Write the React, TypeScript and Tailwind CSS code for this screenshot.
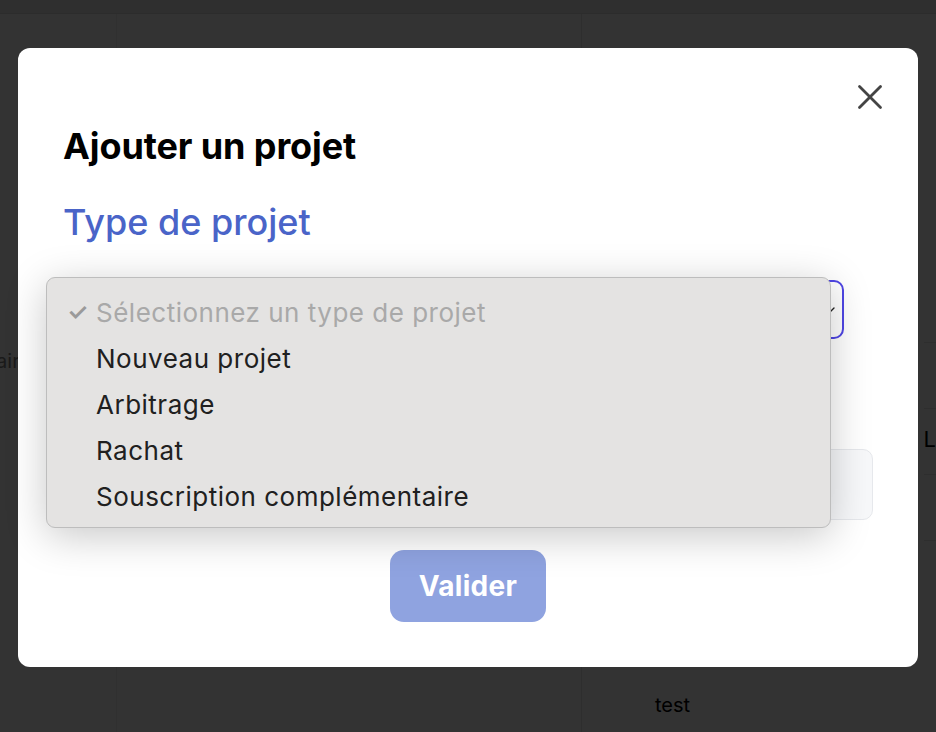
import { ChevronDown, X } from 'lucide-react';

const OPTIONS = ['Nouveau projet', 'Arbitrage', 'Rachat', 'Souscription complémentaire'];

export default function App() {
  return (
    <div className="relative w-[936px] h-[732px] overflow-hidden bg-[#333333] font-['Inter',sans-serif]">
      {/* Page behind the overlay */}
      <div className="h-[14px] bg-[#2f2f2f] border-b border-[#2c2c2c]" />
      <div className="flex h-[718px]">
        <div className="w-[118px] border-r border-[#303030] pt-[332px]">
          <div className="w-[31px] flex justify-end whitespace-nowrap text-[20px] text-[#1a1a1a]">
            Commentaire
          </div>
        </div>
        <div className="w-[468px] border-r border-[#2e2e2e]" />
        <div className="flex-1 flex flex-col pt-[328px] pl-[342px]">
          <div className="h-[66px] border-t border-[#2e2e2e]" />
          <div className="h-[66px] border-t border-[#2e2e2e] pt-[14px] text-[22px] text-black">L</div>
          <div className="h-[66px] border-t border-[#2e2e2e]" />
          <div className="border-t border-[#2e2e2e]" />
        </div>
      </div>
      <div className="absolute left-[655px] top-[690px] text-[20px] text-black">test</div>

      {/* Modal */}
      <div className="absolute left-[18px] top-[48px] w-[900px] h-[619px] bg-white rounded-[12px] px-[45px] pt-[76px]">
        <button className="absolute right-[27px] top-[28px] text-[#444]">
          <X size={42} strokeWidth={1.6} />
        </button>
        <h2 className="text-[36px] leading-[44px] font-bold text-black tracking-[-0.1px]">Ajouter un projet</h2>
        <h3 className="mt-[32px] text-[36px] leading-[44px] font-medium text-[#4a64c8]">Type de projet</h3>
        <div className="mt-[36px] w-[781px] h-[59px] rounded-[10px] border-2 border-[#4f46e5] flex items-center justify-end pr-[4px]">
          <ChevronDown size={16} className="text-[#222]" />
        </div>
        <div className="mt-[110px] w-[810px] h-[71px] rounded-[10px] border border-[#e6e8ec] bg-[#f7f8fa]" />
        <div className="mt-[30px] flex justify-center">
          <button className="w-[156px] h-[72px] rounded-[14px] bg-[#8fa3e0] text-white text-[28px] font-bold tracking-[0.3px]">
            Valider
          </button>
        </div>
      </div>

      {/* Native select popup */}
      <div className="absolute left-[46px] top-[277px] w-[785px] h-[251px] rounded-[9px] border border-[#bdbdbd] bg-[#e4e3e2] shadow-[0_8px_40px_rgba(0,0,0,0.22)] pt-[11px]">
        <div className="h-[46px] flex items-center text-[26px] tracking-[0.5px] text-[#a9a9a9]">
          <span className="w-[49px] pl-[20px] text-[24px] font-semibold text-[#9a9a9a]">✓</span>
          <span>Sélectionnez un type de projet</span>
        </div>
        {OPTIONS.map((o) => (
          <div key={o} className="h-[46px] flex items-center pl-[49px] text-[26px] tracking-[0.5px] text-[#202020]">
            {o}
          </div>
        ))}
      </div>
    </div>
  );
}
